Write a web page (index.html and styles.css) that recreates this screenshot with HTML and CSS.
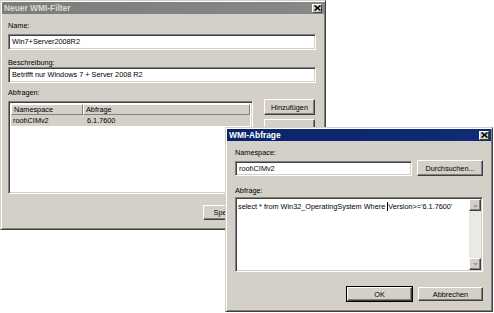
FILE: index.html
```html
<!DOCTYPE html>
<html lang="de">
<head>
    <meta charset="utf-8">
    <title>WMI-Filter</title>
    <link rel="stylesheet" href="styles.css">
</head>
<body>
    <div class="window filterwin">
        <div class="titlebar inactive">
            <span class="title">Neuer WMI-Filter</span>
            <span class="closebtn"><svg width="7" height="6" viewBox="0 0 7 6"><path d="M0.5 0.5 L6.5 5.5 M6.5 0.5 L0.5 5.5" stroke="#000" stroke-width="1.6"/></svg></span>
        </div>
        <div class="content">
            <div class="label">Name:</div>
            <div class="field">Win7+Server2008R2</div>
            <div class="label desc">Beschreibung:</div>
            <div class="field nogap">Betrifft nur Windows 7 + Server 2008 R2</div>
            <div class="label queries">Abfragen:</div>
            <div class="listrow">
                <div class="listview">
                    <div class="lvhead">
                        <span class="lvcol first">Namespace</span>
                        <span class="lvcol">Abfrage</span>
                    </div>
                    <div class="lvitem selected">
                        <span class="lvcell first">root\CIMv2</span>
                        <span class="lvcell">6.1.7600</span>
                    </div>
                </div>
                <div class="sidebtns">
                    <div class="btn side">Hinzufügen</div>
                    <!-- covered by the second window -->
                    <div class="btn side"></div>
                    <div class="btn side"></div>
                </div>
            </div>
            <div class="btnrow">
                <div class="btn wide">Speichern</div>
                <div class="btn wide"></div>
            </div>
        </div>
    </div>

    <div class="window querywin">
        <div class="titlebar">
            <span class="title">WMI-Abfrage</span>
            <span class="closebtn"><svg width="7" height="6" viewBox="0 0 7 6"><path d="M0.5 0.5 L6.5 5.5 M6.5 0.5 L0.5 5.5" stroke="#000" stroke-width="1.6"/></svg></span>
        </div>
        <div class="content qcontent">
            <div class="label">Namespace:</div>
            <div class="nsrow">
                <div class="field small">root\CIMv2</div>
                <div class="btn browse">Durchsuchen...</div>
            </div>
            <div class="label qlabel">Abfrage:</div>
            <div class="textarea">
                <div class="tatext">select * from Win32_OperatingSystem Where <span class="caret"></span>Version&gt;='6.1.7600'</div>
                <div class="scrollbar">
                    <div class="sbbtn"><svg width="5" height="3" viewBox="0 0 5 3"><path d="M2.5 0 L5 3 L0 3 Z" fill="#a0a0a0"/></svg></div>
                    <div class="sbtrack"></div>
                    <div class="sbbtn"><svg width="5" height="3" viewBox="0 0 5 3"><path d="M0 0 L5 0 L2.5 3 Z" fill="#a0a0a0"/></svg></div>
                </div>
            </div>
            <div class="btnrow qbtns">
                <div class="btn dlg default">OK</div>
                <div class="btn dlg">Abbrechen</div>
            </div>
        </div>
    </div>
</body>
</html>
```
FILE: styles.css
```css
body {
    margin: 0;
    background: #fff;
    font-family: "Liberation Sans", Arial, sans-serif;
    font-size: 7.3px;
    color: #000;
    position: relative;
    width: 494px;
    height: 313px;
    overflow: hidden;
}
.window {
    position: absolute;
    box-sizing: border-box;
    background: #d4d0c8;
    border: 1px solid;
    border-color: #d4d0c8 #404040 #404040 #d4d0c8;
    box-shadow: inset 1px 1px #fff, inset -1px -1px #808080;
    padding: 1px;
}
.filterwin {
    left: 0;
    top: 0;
    width: 326px;
    height: 230px;
}
.querywin {
    left: 225px;
    top: 127px;
    width: 268px;
    height: 185px;
}
.titlebar {
    height: 12px;
    background: linear-gradient(to right, #0a246a, #102c78);
    color: #fff;
    display: flex;
    align-items: center;
    justify-content: space-between;
    padding: 0 2px 0 2px;
}
.titlebar.inactive {
    background: linear-gradient(to right, #7c7c7c, #888);
    color: #dcdad4;
}
.title {
    font-weight: bold;
    font-size: 8.4px;
}
.closebtn {
    width: 10px;
    height: 9px;
    box-sizing: border-box;
    background: #d4d0c8;
    border: 1px solid;
    border-color: #fff #404040 #404040 #fff;
    display: flex;
    align-items: center;
    justify-content: center;
}
.content {
    padding: 7px 8px 0 6px;
    display: flex;
    flex-direction: column;
}
.label {
    line-height: 9px;
    height: 9px;
}
.label.desc {
    margin-top: 8px;
}
.label.queries {
    margin-top: 5px;
}
.field {
    margin-top: 4px;
    height: 16px;
    box-sizing: border-box;
    background: #fff;
    border: 1px solid;
    border-color: #808080 #fff #fff #808080;
    box-shadow: inset 1px 1px #404040, inset -1px -1px #d4d0c8;
    padding: 0 3px;
    line-height: 14px;
    white-space: nowrap;
}
.field.nogap {
    margin-top: 0;
}
.listrow {
    display: flex;
    align-items: flex-start;
    gap: 11px;
    margin-top: 4px;
}
.listview {
    width: 245px;
    height: 93px;
    box-sizing: border-box;
    background: #fff;
    border: 1px solid;
    border-color: #808080 #fff #fff #808080;
    box-shadow: inset 1px 1px #404040, inset -1px -1px #d4d0c8;
    padding: 2px 2px 0 2px;
}
.lvhead {
    display: flex;
    height: 11px;
}
.lvcol {
    box-sizing: border-box;
    background: #d4d0c8;
    border: 1px solid;
    border-color: #fff #808080 #808080 #fff;
    flex: 1;
    padding-left: 2px;
    line-height: 9px;
}
.lvcol.first {
    flex: 0 0 72px;
}
.lvitem {
    display: flex;
    height: 11px;
    line-height: 11px;
}
.lvitem.selected {
    background: #d4d0c8;
}
.lvcell {
    flex: 1;
    padding-left: 2px;
}
.lvcell.first {
    flex: 0 0 72px;
}
.sidebtns {
    display: flex;
    flex-direction: column;
    gap: 4px;
    margin-top: -2px;
}
.btn {
    box-sizing: border-box;
    background: #d4d0c8;
    border: 1px solid;
    border-color: #fff #404040 #404040 #fff;
    box-shadow: inset -1px -1px #808080;
    display: flex;
    align-items: center;
    justify-content: center;
    white-space: nowrap;
}
.btn.side {
    width: 51px;
    height: 16px;
}
.btnrow {
    display: flex;
    justify-content: flex-end;
    gap: 5px;
    margin-top: 11px;
}
.btn.wide {
    width: 54px;
    height: 15px;
}
.qcontent {
    padding: 7px 8px 0 8px;
}
.nsrow {
    display: flex;
    align-items: center;
    gap: 5px;
    margin-top: 3px;
}
.field.small {
    margin-top: 0;
    width: 177px;
    height: 15px;
    line-height: 13px;
}
.btn.browse {
    width: 66px;
    height: 16px;
}
.label.qlabel {
    margin-top: 10px;
}
.textarea {
    margin-top: 2px;
    height: 75px;
    box-sizing: border-box;
    background: #fff;
    border: 1px solid;
    border-color: #808080 #fff #fff #808080;
    box-shadow: inset 1px 1px #404040, inset -1px -1px #d4d0c8;
    padding: 2px 1px 1px 2px;
    display: flex;
}
.tatext {
    flex: 1;
    padding: 2px 0 0 0;
    white-space: nowrap;
    line-height: 9px;
}
.caret {
    display: inline-block;
    width: 1px;
    height: 9px;
    background: #000;
    vertical-align: -2px;
}
.scrollbar {
    width: 12px;
    display: flex;
    flex-direction: column;
    margin-top: -1px;
}
.sbbtn {
    height: 12px;
    box-sizing: border-box;
    background: #d4d0c8;
    border: 1px solid;
    border-color: #fff #404040 #404040 #fff;
    box-shadow: inset -1px -1px #808080;
    display: flex;
    align-items: center;
    justify-content: center;
}
.sbtrack {
    flex: 1;
    background: #ebe9e5;
}
.qbtns {
    margin-top: 15px;
    gap: 6px;
}
.btn.dlg {
    width: 65px;
    height: 14px;
}
.btn.default {
    outline: 1px solid #000;
    outline-offset: 0;
}
```
